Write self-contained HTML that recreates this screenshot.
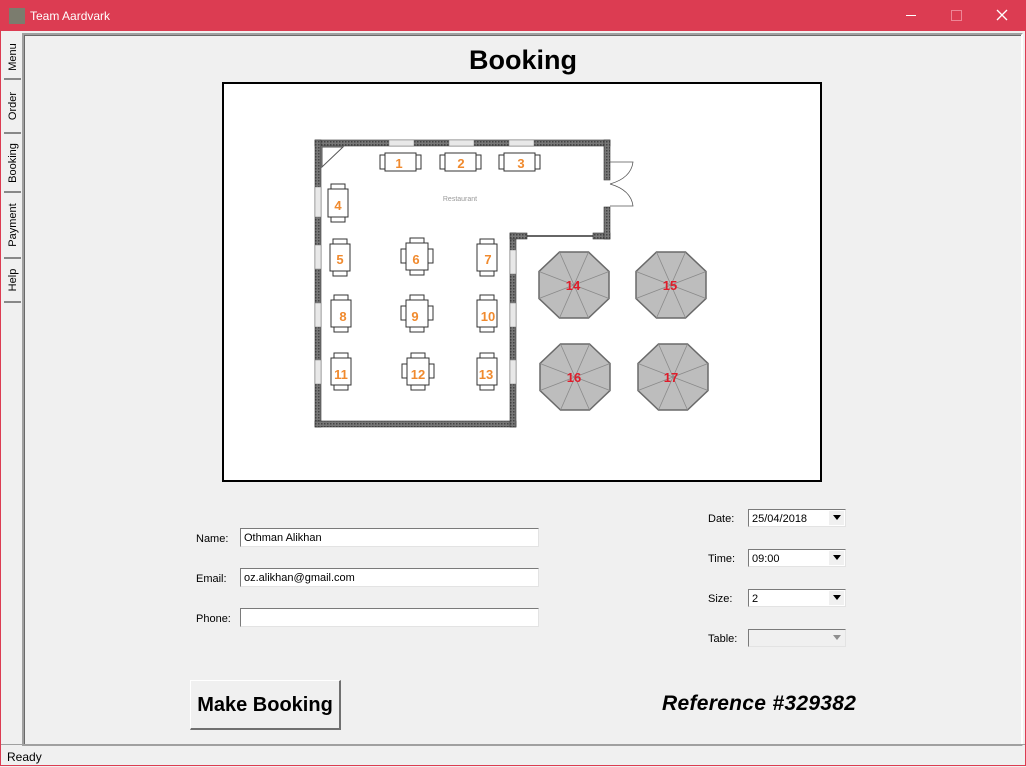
<!DOCTYPE html>
<html><head><meta charset="utf-8"><style>
body{margin:0;width:1026px;height:767px;overflow:hidden;background:#f0f0f0;font-family:"Liberation Sans",sans-serif;position:relative}
.abs{position:absolute}
.tb{left:0;top:0;width:1026px;height:31px;background:#dc3c52;color:#fff;font-size:12px}
.frame{left:0;top:31px;width:1024px;height:734px;border:1px solid #dc3c52;border-top:0}
.panel{left:22px;top:33px;width:997px;height:709px;border-top:2px solid #a0a0a0;border-left:2px solid #a0a0a0;border-right:2px solid #fff;border-bottom:2px solid #a0a0a0;box-shadow:inset 1px 1px 0 #696969}
.tab{left:4px;width:17px;font-size:11px;color:#000;border-bottom:2px solid #888}
.tab span{position:absolute;left:50%;top:50%;transform:translate(-50%,-50%) rotate(-90deg);white-space:nowrap}
.lbl{font-size:11px;color:#000}
.inp{background:#fff;border:1px solid #7a7a7a;border-right-color:#e3e3e3;border-bottom-color:#e3e3e3;box-sizing:border-box;height:19px;font-size:11px;padding:3px 0 0 3px}
.cb{background:#fff;border:1px solid #7a7a7a;border-right-color:#e3e3e3;border-bottom-color:#e3e3e3;box-sizing:border-box;width:98px;height:18px;font-size:11px;padding:3px 0 0 3px}
.cb i{position:absolute;right:1px;top:1px;width:15px;height:14px;background:#f0f0f0;box-sizing:border-box}
.cb i:after{content:"";position:absolute;left:4px;top:4px;border-left:4px solid transparent;border-right:4px solid transparent;border-top:5px solid #000}
</style></head><body>
<div class="abs tb">
  <div class="abs" style="left:9px;top:8px;width:16px;height:16px;background:#7b7c6e"></div>
  <div class="abs" style="left:30px;top:9px">Team Aardvark</div>
  <div class="abs" style="left:906px;top:15px;width:10px;height:1px;background:#fff"></div>
  <div class="abs" style="left:951px;top:10px;width:9px;height:9px;border:1px solid #ee8595"></div>
  <svg class="abs" style="left:996px;top:9px" width="12" height="12"><path d="M1 1L11 11M11 1L1 11" stroke="#fff" stroke-width="1.3"/></svg>
</div>
<div class="abs frame"></div>
<div class="abs tab" style="top:36px;height:42px"><span>Menu</span></div>
<div class="abs tab" style="top:80px;height:52px"><span>Order</span></div>
<div class="abs tab" style="top:135px;height:56px;border-bottom:2px solid #888"><span>Booking</span></div>
<div class="abs tab" style="top:193px;height:64px"><span>Payment</span></div>
<div class="abs tab" style="top:259px;height:42px"><span>Help</span></div>
<div class="abs panel"></div>
<div class="abs" style="left:0;top:45px;width:1046px;text-align:center;font-size:27px;font-weight:bold">Booking</div>
<div class="abs" style="left:222px;top:82px;width:596px;height:396px;border:2px solid #000;background:#fff"></div>
<svg class="abs" style="left:0;top:0" width="1026" height="767">
<defs>
<pattern id="h" width="3" height="3" patternUnits="userSpaceOnUse"><rect width="3" height="3" fill="#777"/><rect width="1.5" height="1.5" fill="#444"/></pattern>
<g id="oct"><polygon points="-14.5,-33 14.5,-33 35,-13.5 35,13.5 14.5,33 -14.5,33 -35,13.5 -35,-13.5" fill="#bdbdbd" stroke="#6a6a6a" stroke-width="1.5"/>
<path d="M0 0L-14.5 -33M0 0L14.5 -33M0 0L35 -13.5M0 0L35 13.5M0 0L14.5 33M0 0L-14.5 33M0 0L-35 13.5M0 0L-35 -13.5" stroke="#8a8a8a" stroke-width="0.8"/></g>
</defs>
<g fill="url(#h)" stroke="#333" stroke-width="0.6">
<rect x="315" y="140" width="295" height="6"/>
<rect x="315" y="140" width="6" height="287"/>
<rect x="315" y="421" width="201" height="6"/>
<rect x="510" y="233" width="6" height="194"/>
<rect x="510" y="233" width="17" height="6"/>
<rect x="593" y="233" width="17" height="6"/>
<rect x="604" y="140" width="6" height="40"/>
<rect x="604" y="207" width="6" height="32"/>
</g>
<g fill="#e8e8e8" stroke="#777" stroke-width="0.5">
<rect x="389" y="140" width="25" height="6"/><rect x="449" y="140" width="25" height="6"/><rect x="509" y="140" width="25" height="6"/>
<rect x="315" y="187" width="6" height="30"/><rect x="315" y="245" width="6" height="24"/><rect x="315" y="303" width="6" height="24"/><rect x="315" y="360" width="6" height="24"/>
<rect x="510" y="250" width="6" height="24"/><rect x="510" y="303" width="6" height="24"/><rect x="510" y="360" width="6" height="24"/>
</g>
<path d="M527 236H593" stroke="#333" stroke-width="1.5"/>
<path d="M322 147H343L322 167Z" fill="none" stroke="#555"/>
<path d="M610 162H633Q631 178 610 184M610 206H633Q631 190 610 184" fill="none" stroke="#555" stroke-width="0.8"/>
<text x="460" y="201" font-size="7" fill="#999" text-anchor="middle">Restaurant</text>
<g fill="#fff" stroke="#333" stroke-width="1">
<rect x="380" y="155" width="5" height="14"/><rect x="416" y="155" width="5" height="14"/><rect x="385" y="153" width="31" height="18"/>
<rect x="440" y="155" width="5" height="14"/><rect x="476" y="155" width="5" height="14"/><rect x="445" y="153" width="31" height="18"/>
<rect x="499" y="155" width="5" height="14"/><rect x="535" y="155" width="5" height="14"/><rect x="504" y="153" width="31" height="18"/>
<rect x="331" y="184" width="14" height="5"/><rect x="331" y="217" width="14" height="5"/><rect x="328" y="189" width="20" height="28"/>
<rect x="333" y="239" width="14" height="5"/><rect x="333" y="271" width="14" height="5"/><rect x="330" y="244" width="20" height="27"/>
<rect x="480" y="239" width="14" height="5"/><rect x="480" y="271" width="14" height="5"/><rect x="477" y="244" width="20" height="27"/>
<rect x="334" y="295" width="14" height="5"/><rect x="334" y="327" width="14" height="5"/><rect x="331" y="300" width="20" height="27"/>
<rect x="480" y="295" width="14" height="5"/><rect x="480" y="327" width="14" height="5"/><rect x="477" y="300" width="20" height="27"/>
<rect x="334" y="353" width="14" height="5"/><rect x="334" y="385" width="14" height="5"/><rect x="331" y="358" width="20" height="27"/>
<rect x="480" y="353" width="14" height="5"/><rect x="480" y="385" width="14" height="5"/><rect x="477" y="358" width="20" height="27"/>
<rect x="410" y="238" width="14" height="5"/><rect x="410" y="270" width="14" height="5"/><rect x="401" y="249" width="5" height="14"/><rect x="428" y="249" width="5" height="14"/><rect x="406" y="243" width="22" height="27"/>
<rect x="410" y="295" width="14" height="5"/><rect x="410" y="327" width="14" height="5"/><rect x="401" y="306" width="5" height="14"/><rect x="428" y="306" width="5" height="14"/><rect x="406" y="300" width="22" height="27"/>
<rect x="411" y="353" width="14" height="5"/><rect x="411" y="385" width="14" height="5"/><rect x="402" y="364" width="5" height="14"/><rect x="429" y="364" width="5" height="14"/><rect x="407" y="358" width="22" height="27"/>
</g>
<g fill="#f08a2e" font-size="13" font-weight="bold" text-anchor="middle">
<text x="399" y="168">1</text><text x="461" y="168">2</text><text x="521" y="168">3</text>
<text x="338" y="210">4</text><text x="340" y="264">5</text><text x="416" y="264">6</text><text x="488" y="264">7</text>
<text x="343" y="321">8</text><text x="415" y="321">9</text><text x="488" y="321">10</text>
<text x="341" y="379">11</text><text x="418" y="379">12</text><text x="486" y="379">13</text>
</g>
<use href="#oct" x="574" y="285"/><use href="#oct" x="671" y="285"/><use href="#oct" x="575" y="377"/><use href="#oct" x="673" y="377"/>
<g fill="#e01c2a" font-size="13" font-weight="bold" text-anchor="middle">
<text x="573" y="290">14</text><text x="670" y="290">15</text><text x="574" y="382">16</text><text x="671" y="382">17</text>
</g>
</svg>
<div class="abs lbl" style="left:196px;top:533px">Name:</div>
<div class="abs lbl" style="left:196px;top:573px">Email:</div>
<div class="abs lbl" style="left:196px;top:613px">Phone:</div>
<div class="abs inp" style="left:240px;top:528px;width:299px">Othman Alikhan</div>
<div class="abs inp" style="left:240px;top:568px;width:299px">oz.alikhan@gmail.com</div>
<div class="abs inp" style="left:240px;top:608px;width:299px"></div>
<div class="abs lbl" style="left:708px;top:513px">Date:</div>
<div class="abs lbl" style="left:708px;top:553px">Time:</div>
<div class="abs lbl" style="left:708px;top:593px">Size:</div>
<div class="abs lbl" style="left:708px;top:633px">Table:</div>
<div class="abs cb" style="left:748px;top:509px">25/04/2018<i></i></div>
<div class="abs cb" style="left:748px;top:549px">09:00<i></i></div>
<div class="abs cb" style="left:748px;top:589px">2<i></i></div>
<div class="abs cb" style="left:748px;top:629px;background:#f0f0f0"><i style="opacity:.4"></i></div>
<div class="abs" style="left:190px;top:680px;width:151px;height:50px;box-sizing:border-box;border:1px solid #fff;border-right:2px solid #707070;border-bottom:2px solid #707070;background:#f0f0f0;font-size:20px;font-weight:bold;text-align:center;line-height:48px">Make Booking</div>
<div class="abs" style="left:662px;top:692px;font-size:21px;font-weight:bold;font-style:italic;letter-spacing:0.3px">Reference #329382</div>
<div class="abs" style="left:1px;top:744px;width:1024px;height:1px;background:#a0a0a0"></div>
<div class="abs" style="left:7px;top:750px;font-size:12px">Ready</div>
</body></html>
